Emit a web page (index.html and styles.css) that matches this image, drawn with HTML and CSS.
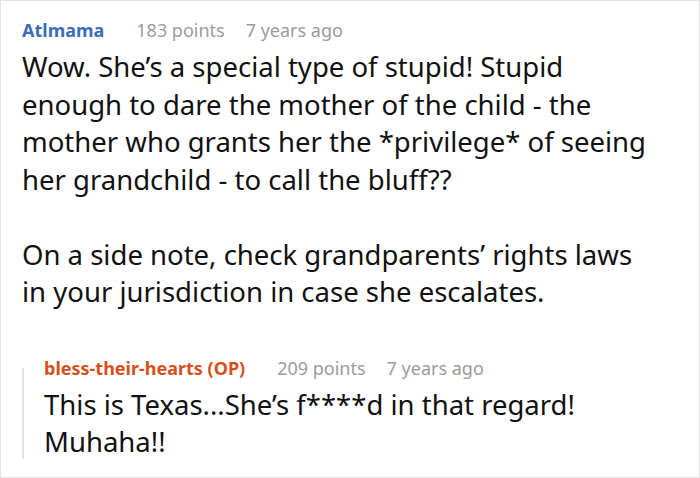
FILE: index.html
```html
<!DOCTYPE html>
<html lang="en">
<head>
    <meta charset="UTF-8">
    <title>Comment thread</title>
    <link rel="stylesheet" href="styles.css">
</head>
<body>
    <div class="comment">
        <div class="meta">
            <span class="author">Atlmama</span><span class="points">183 points</span><span class="time">7 years ago</span>
        </div>
        <p class="text">Wow. She’s a special type of stupid! Stupid enough to dare the mother of the child - the mother who grants her the *privilege* of seeing her grandchild - to call the bluff??<br><br>On a side note, check grandparents’ rights laws in your jurisdiction in case she escalates.</p>

        <div class="reply">
            <div class="meta">
                <span class="author op">bless-their-hearts (OP)</span><span class="points">209 points</span><span class="time">7 years ago</span>
            </div>
            <p class="text">This is Texas...She’s f****d in that regard! Muhaha!!</p>
        </div>
    </div>
</body>
</html>
```

FILE: styles.css
```css
body {
    margin: 0;
    font-family: 'Noto Sans', 'Open Sans', sans-serif;
    background: white;
}
.comment {
    box-sizing: border-box;
    height: 478px;
    border: 1px solid #e2e2e2;
    padding: 17px 37px 0 21px;
    color: #111;
}
.meta {
    display: flex;
    font-size: 18px;
    line-height: 24px;
    color: #9b9b9b;
}
.author {
    font-weight: bold;
    color: #3a6db8;
    margin-right: 32px;
}
.author.op {
    color: #d4511d;
}
.points {
    margin-right: 21px;
}
.text {
    margin: 6px 0 0;
    font-size: 27.5px;
    line-height: 37.5px;
}
.reply {
    margin-top: 45px;
    padding-left: 22px;
    background: linear-gradient(#e3e3e3, #e3e3e3) no-repeat 0 12px / 2px calc(100% - 14px);
}
.reply .text {
    margin-top: 6px;
}
```
